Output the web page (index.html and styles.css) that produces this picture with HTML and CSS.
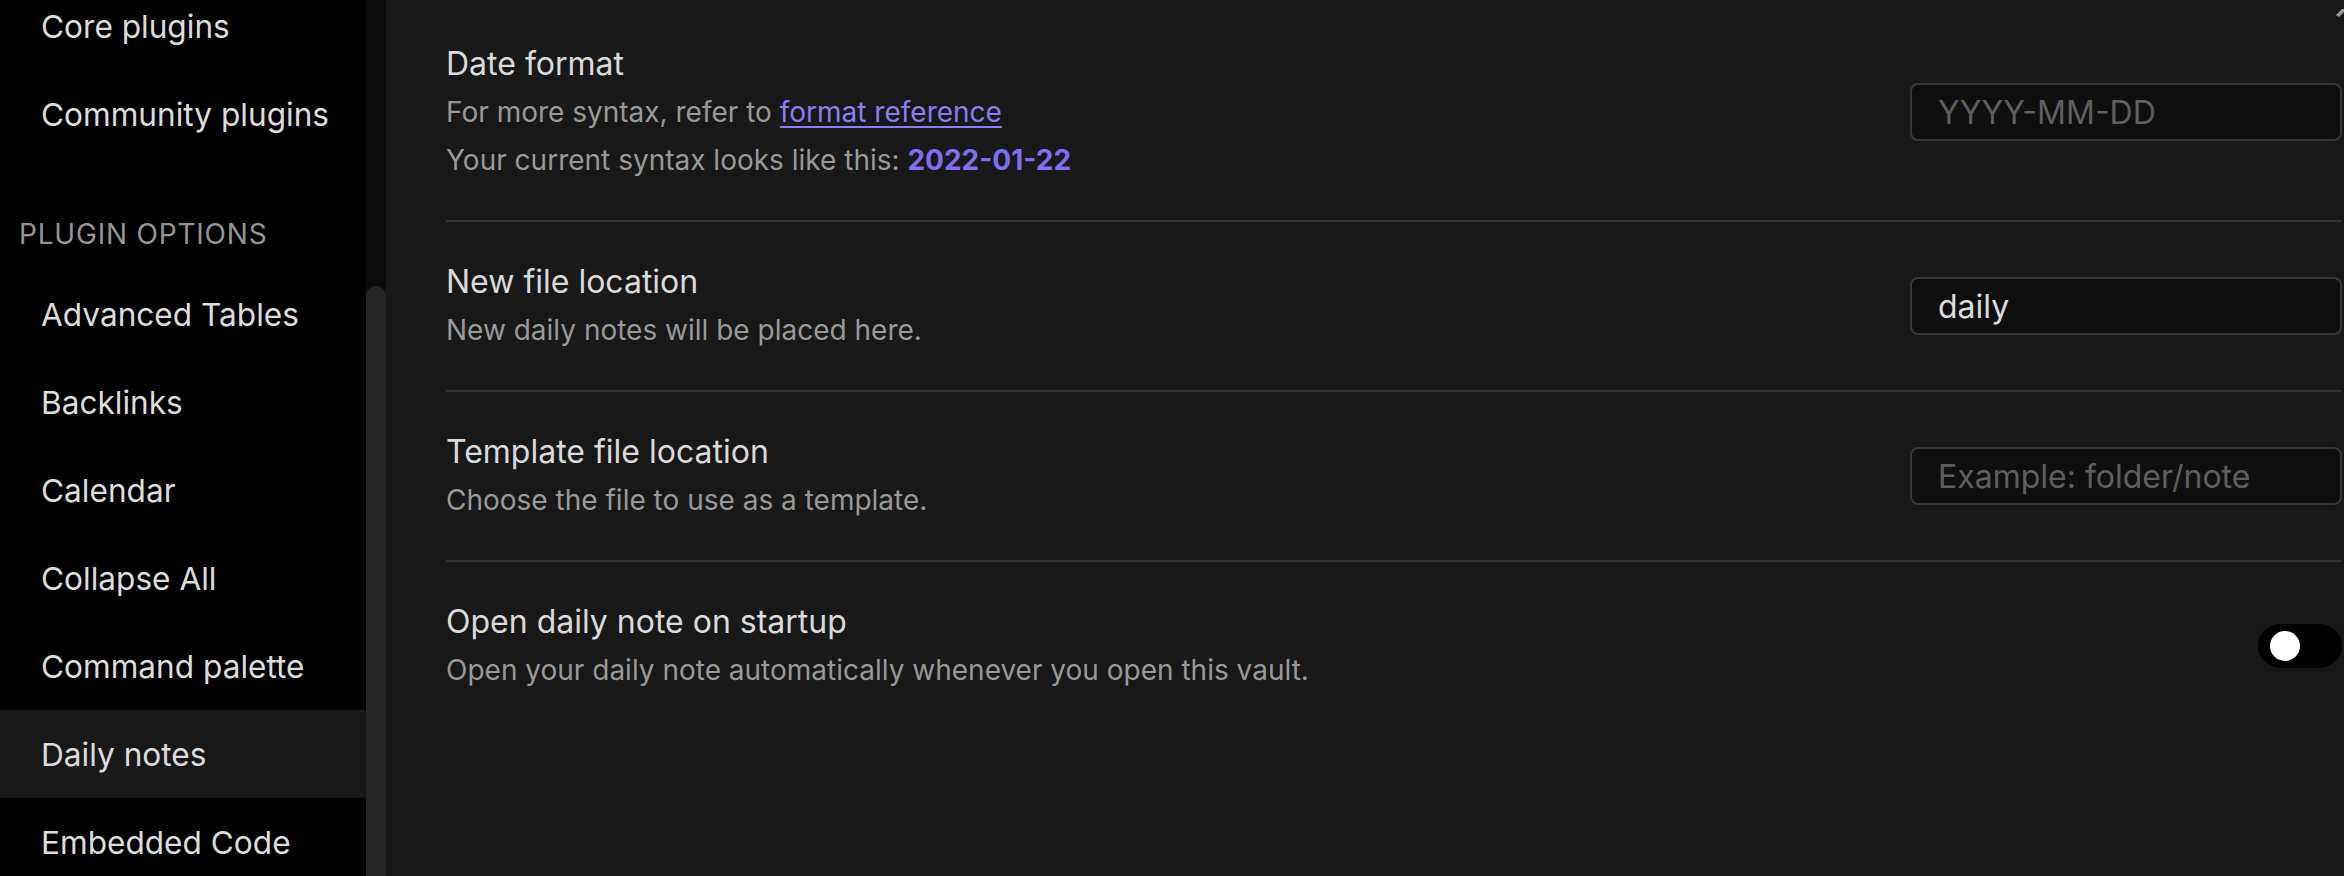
FILE: index.html
```html
<!DOCTYPE html>
<html>
<head>
<meta charset="utf-8">
<link rel="stylesheet" href="styles.css">
</head>
<body>
<div class="app">
  <nav class="sidebar">
    <div class="sidebar-inner">
      <div class="nav-item">Core plugins</div>
      <div class="nav-item">Community plugins</div>
      <div class="nav-group-title">PLUGIN OPTIONS</div>
      <div class="nav-item">Advanced Tables</div>
      <div class="nav-item">Backlinks</div>
      <div class="nav-item">Calendar</div>
      <div class="nav-item">Collapse All</div>
      <div class="nav-item">Command palette</div>
      <div class="nav-item is-active">Daily notes</div>
      <div class="nav-item">Embedded Code</div>
    </div>
  </nav>
  <div class="scroll-track"><div class="scroll-thumb"></div></div>
  <main class="content">
    <svg class="corner-icon" width="8" height="12" viewBox="0 0 8 12"><path d="M0 7 L6 1 L8 1 L8 4 L3 9 Z" fill="#9a9a9a"/></svg>
    <div class="setting-item">
      <div class="setting-info">
        <div class="setting-name">Date format</div>
        <div class="setting-desc">For more syntax, refer to <a class="link" href="#">format reference</a><br>Your current syntax looks like this: <b class="accent">2022-01-22</b></div>
      </div>
      <div class="setting-control"><input class="text-input" type="text" placeholder="YYYY-MM-DD"></div>
    </div>
    <div class="setting-item">
      <div class="setting-info">
        <div class="setting-name">New file location</div>
        <div class="setting-desc">New daily notes will be placed here.</div>
      </div>
      <div class="setting-control"><input class="text-input" type="text" value="daily"></div>
    </div>
    <div class="setting-item">
      <div class="setting-info">
        <div class="setting-name">Template file location</div>
        <div class="setting-desc">Choose the file to use as a template.</div>
      </div>
      <div class="setting-control"><input class="text-input" type="text" placeholder="Example: folder/note"></div>
    </div>
    <div class="setting-item">
      <div class="setting-info">
        <div class="setting-name">Open daily note on startup</div>
        <div class="setting-desc">Open your daily note automatically whenever you open this vault.</div>
      </div>
      <div class="setting-control"><div class="toggle"><div class="toggle-knob"></div></div></div>
    </div>
  </main>
</div>
</body>
</html>
```
FILE: styles.css
```css
* { box-sizing: border-box; }
html, body {
  margin: 0;
  padding: 0;
  background: #181818;
  font-family: Inter, "Noto Sans", sans-serif;
  overflow: hidden;
}
.app {
  display: flex;
  width: 2344px;
  height: 876px;
  overflow: hidden;
}
.sidebar {
  width: 366px;
  flex: none;
  background: #000;
  overflow: hidden;
}
.sidebar-inner {
  margin-top: -18px;
  display: flex;
  flex-direction: column;
}
.nav-item {
  height: 88px;
  display: flex;
  align-items: center;
  padding-left: 41px;
  font-size: 31.6px;
  color: #dcdcdc;
}
.nav-item.is-active {
  background: #181818;
}
.nav-group-title {
  padding: 54px 0 14px 19px;
  line-height: 44px;
  font-size: 28px;
  letter-spacing: 0.8px;
  color: #959595;
}
.scroll-track {
  width: 20px;
  flex: none;
  background: #0d0d0d;
  padding-top: 286px;
  display: flex;
}
.scroll-thumb {
  flex: 1;
  background: #262626;
  border-radius: 10px 10px 0 0;
}
.content {
  position: relative;
  flex: 1;
  background: #181818;
  padding: 4px 2px 0 60px;
}
.corner-icon {
  position: absolute;
  right: 0;
  top: 8px;
}
.setting-item {
  display: flex;
  align-items: center;
  padding: 36px 0;
  border-top: 2px solid #333;
}
.setting-item:first-of-type {
  border-top: none;
}
.setting-info {
  flex: 1;
}
.setting-name {
  font-size: 32px;
  line-height: 48px;
  color: #dadada;
}
.setting-desc {
  font-size: 28px;
  line-height: 48px;
  color: #999;
}
.link {
  color: #8a7ef2;
  text-decoration: underline;
  text-decoration-thickness: 2px;
  text-underline-offset: 4px;
}
.accent {
  color: #7f6df2;
  font-weight: 700;
}
.setting-control {
  display: flex;
  align-items: center;
}
.text-input {
  width: 432px;
  height: 58px;
  border: 2px solid #363636;
  border-radius: 8px;
  background: #0f0f0f;
  padding: 0 0 0 26px;
  font-family: Inter, "Noto Sans", sans-serif;
  font-size: 32px;
  color: #dcdcdc;
  outline: none;
}
.text-input::placeholder {
  color: #5e5e5e;
}
.toggle {
  width: 84px;
  height: 44px;
  border-radius: 22px;
  background: #000;
  padding: 7px 12px;
}
.toggle-knob {
  width: 30px;
  height: 30px;
  border-radius: 50%;
  background: #fff;
}
```
